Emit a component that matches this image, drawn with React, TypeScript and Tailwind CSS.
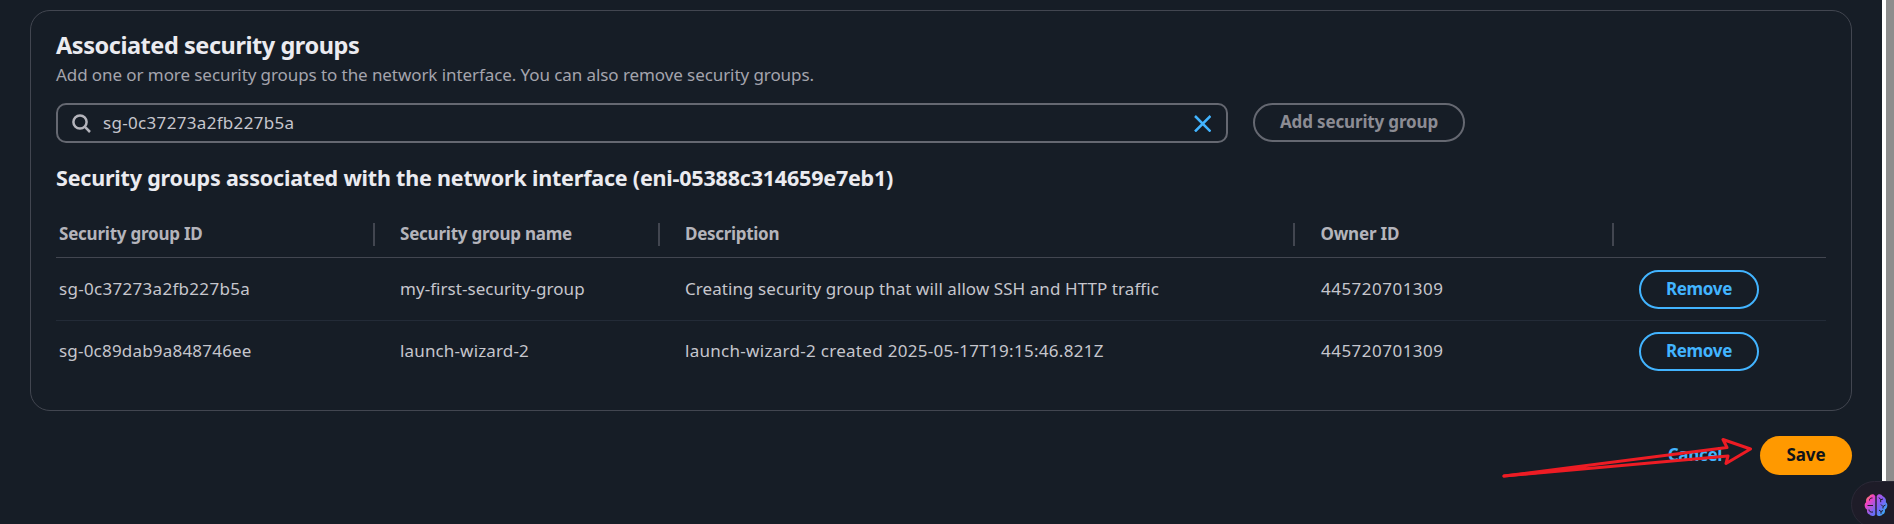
import React from "react";

const columns = "grid grid-cols-[319px_285px_635px_319px_212px] items-center";

const headers = [
  { label: "Security group ID", className: "pl-[3px] tracking-[-0.23px]" },
  { label: "Security group name", className: "pl-[25px] tracking-[-0.23px]" },
  { label: "Description", className: "pl-[25px] tracking-[-0.3px]" },
  { label: "Owner ID", className: "pl-[25.5px] tracking-[-0.2px]" },
];

const rows = [
  {
    id: "sg-0c37273a2fb227b5a",
    name: "my-first-security-group",
    description: "Creating security group that will allow SSH and HTTP traffic",
    owner: "445720701309",
    idTracking: "tracking-[0.3px]",
    nameTracking: "tracking-[0.05px]",
    descriptionTracking: "tracking-[0.07px]",
    rowClass: "h-[63px] border-b border-[#232b37] pt-px",
  },
  {
    id: "sg-0c89dab9a848746ee",
    name: "launch-wizard-2",
    description: "launch-wizard-2 created 2025-05-17T19:15:46.821Z",
    owner: "445720701309",
    idTracking: "tracking-[0.2px]",
    nameTracking: "tracking-[0.15px]",
    descriptionTracking: "tracking-[0.29px]",
    rowClass: "h-[61px]",
  },
];

function SearchField() {
  return (
    <div className="flex h-10 w-[1172px] items-center rounded-[10px] border-2 border-[#656871] pr-[15px] pl-[14px]">
      <svg width="19" height="19" viewBox="0 0 19 19" fill="none" stroke="#b4b4bb" strokeWidth="2.5">
        <circle cx="8" cy="8" r="6.600" />
        <path d="M12.700 12.700 18 18" />
      </svg>
      <span className="ml-[12px] flex-1 pb-px tracking-[0.32px] text-[#c6c6cd]">sg-0c37273a2fb227b5a</span>
      <svg width="17" height="17" viewBox="0 0 17 17" fill="none" stroke="#42b4ff" strokeWidth="2.500">
        <path d="M1 1 16.500 16.500M16.500 1 1 16.500" />
      </svg>
    </div>
  );
}

function Brain() {
  return (
    <svg width="24" height="24" viewBox="0 0 24 24">
      <defs>
        <linearGradient id="brainLeft" x1="0" y1="0" x2="0.6" y2="1">
          <stop offset="0.1" stopColor="#ff9a3d" />
          <stop offset="0.4" stopColor="#f03fc4" />
          <stop offset="1" stopColor="#6a6cf6" />
        </linearGradient>
        <linearGradient id="brainRight" x1="0" y1="0" x2="0.7" y2="1">
          <stop offset="0" stopColor="#c04fe0" />
          <stop offset="0.5" stopColor="#7a62f5" />
          <stop offset="1" stopColor="#2fb8f5" />
        </linearGradient>
      </defs>
      <path
        fill="url(#brainLeft)"
        d="M11.300 3.200v18.200C10.500 23.300 7 23.800 5.600 21.600 3.400 20.900 2.500 18.600 3.200 16.800 0 15 0 10.200 2.200 9.200 1.500 6.300 3 4 5.200 3.300 6.500 .6 10.300.4 11.300 3.200Z"
      />
      <path
        fill="url(#brainRight)"
        d="M12.700 3.200v18.200c.8 1.900 4.300 2.400 5.700.2 2.200-.7 3.100-3 2.400-4.800 3.200-1.800 3.200-6.600 1-7.600.7-2.900-.8-5.200-3-5.900-1.300-2.700-5.100-2.900-6.100-.1Z"
      />
      <path
        fill="none"
        stroke="#1e1c28"
        strokeWidth="1"
        d="M5.500 7.500C5.500 5.500 6.500 5 8.500 5M3.500 12.500h5.500M5 16.500c0 2 1.500 3 4 2.500M15 4.500l1.700 2.200 2.300-.7M16.700 6.700v2.500M17 11.500l2 2 2.500-1.500M19 13.500v2M15 17l2 1.500 2-1M17 18.500v2.200"
      />
    </svg>
  );
}

export default function App() {
  return (
    <div className="relative flex h-[524px] w-[1894px] overflow-hidden bg-[#161d26] font-['Noto_Sans',sans-serif] text-[17px] leading-6 whitespace-nowrap text-[#c6c6cd]">
      <main className="flex-1 px-[30px] pt-[10px]">
        <section className="h-[401px] rounded-[20px] border border-[#424650] px-[25px] pt-[19px]">
          <h1 className="text-[23.5px] leading-[30px] font-bold tracking-[-0.45px] text-[#ebebf0]">
            Associated security groups
          </h1>
          <p className="mt-[3px] tracking-[-0.08px] text-[#a4a4ad]">
            Add one or more security groups to the network interface. You can also remove security groups.
          </p>

          <div className="mt-4 flex items-start gap-[25px]">
            <SearchField />
            <button className="flex h-[39px] w-[212px] items-center justify-center rounded-full border-2 border-[#656871] pb-[2px] font-bold tracking-[-0.15px] text-[#8c8c94]">
              Add security group
            </button>
          </div>

          <h2 className="mt-[21px] text-[21.5px] leading-7 font-bold tracking-[-0.2px] text-[#ebebf0]">
            Security groups associated with the network interface (eni-05388c314659e7eb1)
          </h2>

          <div className="mt-5">
            <div className={`${columns} h-[46px] border-b border-[#424650] font-bold text-[#b4b4bb]`}>
              {headers.map((h) => (
                <div key={h.label} className={`flex items-center justify-between ${h.className}`}>
                  <span className="pb-[2px]">{h.label}</span>
                  <span className="h-[23px] w-[2px] bg-[#424650]" />
                </div>
              ))}
            </div>
            {rows.map((r) => (
              <div key={r.id} className={`${columns} ${r.rowClass}`}>
                <span className={`pb-[2px] pl-[3px] ${r.idTracking}`}>{r.id}</span>
                <span className={`pb-[2px] pl-[25px] ${r.nameTracking}`}>{r.name}</span>
                <span className={`pb-[2px] pl-[25px] ${r.descriptionTracking}`}>{r.description}</span>
                <span className="pb-[2px] pl-[26px] tracking-[0.48px]">{r.owner}</span>
                <button className="ml-[25px] flex h-[39px] w-[120px] items-center justify-center rounded-full border-2 border-[#42b4ff] pb-[2px] font-bold tracking-[-0.3px] text-[#42b4ff]">
                  Remove
                </button>
              </div>
            ))}
          </div>
        </section>

        <div className="mt-[25px] flex justify-end gap-[38px] font-bold">
          <button className="flex h-[39px] items-center pb-[2px] tracking-[-0.3px] text-[#42b4ff]">Cancel</button>
          <button className="flex h-[39px] w-[92px] items-center justify-center rounded-full bg-[#ff9900] pb-[2px] tracking-[-0.15px] text-[#0f141a]">
            Save
          </button>
        </div>
      </main>
      <div className="w-1 bg-white" />
      <div className="w-2 bg-[#8d8d8d]" />

      <svg
        className="absolute top-[430px] left-[1495px]"
        width="265"
        height="60"
        viewBox="0 0 265 60"
        fill="none"
        stroke="#ed1c24"
        strokeWidth="3"
        strokeLinejoin="round"
        strokeLinecap="round"
      >
        <path d="M9 46 232 17.500 228 9.500 255.500 19 231 33.500 233 26 9 46Z" />
        <path d="M9 46 90 37.500" />
      </svg>

      <div className="absolute top-[481px] left-[1851px] flex h-[47px] w-[60px] items-center rounded-l-full border border-[#2b2937] bg-[#1e1c28] pl-[12px]">
        <Brain />
      </div>
    </div>
  );
}
